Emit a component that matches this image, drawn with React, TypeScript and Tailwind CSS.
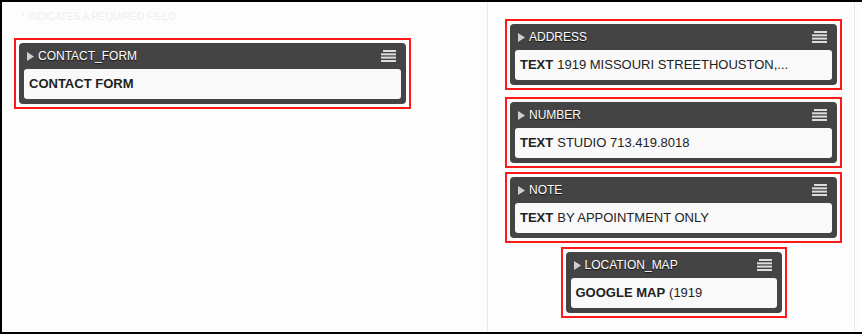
import { FC } from "react";

type BlockProps = {
  title: string;
  label: string;
  value?: string;
  width: string;
};

const Caret: FC = () => (
  <svg width="7" height="9" viewBox="0 0 7 9" className="shrink-0">
    <polygon points="0,0 7,4.5 0,9" fill="#cfcfcf" />
  </svg>
);

const Handle: FC = () => (
  <svg width="15" height="12" viewBox="0 0 15 12" className="shrink-0">
    <rect x="2" y="0" width="13" height="2" fill="#dcdcdc" />
    <rect x="0" y="3.3" width="15" height="2" fill="#dcdcdc" />
    <rect x="0" y="6.6" width="15" height="2" fill="#dcdcdc" />
    <rect x="0" y="10" width="15" height="2" fill="#dcdcdc" />
  </svg>
);

const Block: FC<BlockProps> = ({ title, label, value, width }) => {
  return (
    <div className={`border-2 border-[#ff1a1a] p-[3px] ${width}`}>
      <div className="bg-[#444444] rounded-[4px] pb-[5px]">
        <div className="h-[26px] flex items-center pl-[8px] pr-[10px]">
          <Caret />
          <span className="ml-[4px] text-[12px] text-white [text-shadow:0_1px_1px_#111]">
            {title}
          </span>
          <span className="ml-auto">
            <Handle />
          </span>
        </div>
        <div className="mx-[5px] h-[30px] bg-[#f9f9f9] rounded-[3px] px-[5px] flex items-center text-[13px] text-[#222] whitespace-nowrap overflow-hidden">
          <b className="font-bold">{label}</b>
          {value && <span className="ml-[4px]">{value}</span>}
        </div>
      </div>
    </div>
  );
};

const App: FC = () => {
  return (
    <div className="w-[862px] h-[334px] flex bg-[#fdfdfd] border-l-2 border-t-2 border-b-2 border-black font-['Liberation_Sans',Arial,sans-serif]">
      <section className="w-[485px] pl-[12px] pt-[10px]">
        <div className="text-[10px] text-[#efefef] ml-[7px] leading-none">
          * INDICATES A REQUIRED FIELD
        </div>
        <div className="mt-[16px]">
          <Block title="CONTACT_FORM" label="CONTACT FORM" width="w-[397px]" />
        </div>
      </section>

      <section className="w-[368px] border-l border-r border-[#e8e8e8] pt-[17px] pl-[17px]">
        <div className="w-[337px] flex flex-col items-center">
          <Block
            title="ADDRESS"
            label="TEXT"
            value="1919 MISSOURI STREETHOUSTON,..."
            width="w-[337px]"
          />
          <div className="mt-[7px]">
            <Block
              title="NUMBER"
              label="TEXT"
              value="STUDIO 713.419.8018"
              width="w-[337px]"
            />
          </div>
          <div className="mt-[4px]">
            <Block
              title="NOTE"
              label="TEXT"
              value="BY APPOINTMENT ONLY"
              width="w-[337px]"
            />
          </div>
          <div className="mt-[4px]">
            <Block
              title="LOCATION_MAP"
              label="GOOGLE MAP"
              value="(1919"
              width="w-[226px]"
            />
          </div>
        </div>
      </section>
    </div>
  );
};

export default App;
